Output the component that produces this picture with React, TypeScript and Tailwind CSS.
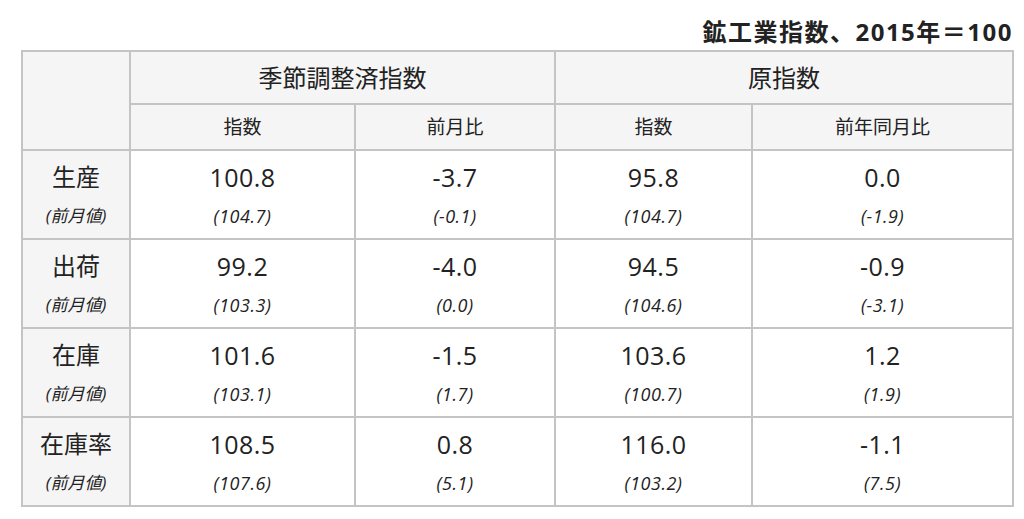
const rows = [
  { label: '生産', vals: ['100.8', '-3.7', '95.8', '0.0'], prev: ['(104.7)', '(-0.1)', '(104.7)', '(-1.9)'] },
  { label: '出荷', vals: ['99.2', '-4.0', '94.5', '-0.9'], prev: ['(103.3)', '(0.0)', '(104.6)', '(-3.1)'] },
  { label: '在庫', vals: ['101.6', '-1.5', '103.6', '1.2'], prev: ['(103.1)', '(1.7)', '(100.7)', '(1.9)'] },
  { label: '在庫率', vals: ['108.5', '0.8', '116.0', '-1.1'], prev: ['(107.6)', '(5.1)', '(103.2)', '(7.5)'] },
];

const cell = 'border-2 border-[#c4c4c4] text-center align-middle';

export default function App() {
  return (
    <div className="w-[1024px] h-[519px] bg-white text-[#222] font-['Open_Sans','Noto_Sans_CJK_JP',sans-serif] pl-[21px] pr-[12px] pt-[17px]">
      <div className="text-right text-[24px] font-bold leading-[30px] h-[33px] tracking-[1.5px] -mr-[1px]">鉱工業指数、2015年＝100</div>
      <table className="w-[991px] border-collapse table-fixed">
        <colgroup>
          <col className="w-[108px]" />
          <col className="w-[225px]" />
          <col className="w-[200px]" />
          <col className="w-[197px]" />
          <col className="w-[261px]" />
        </colgroup>
        <thead>
          <tr className="h-[53px] bg-[#f5f5f5]">
            <th rowSpan={2} className={cell}></th>
            <th colSpan={2} className={`${cell} text-[24px] font-normal`}>季節調整済指数</th>
            <th colSpan={2} className={`${cell} text-[24px] font-normal`}>原指数</th>
          </tr>
          <tr className="h-[46px] bg-[#f5f5f5]">
            <th className={`${cell} text-[19px] font-normal`}>指数</th>
            <th className={`${cell} text-[19px] font-normal`}>前月比</th>
            <th className={`${cell} text-[19px] font-normal`}>指数</th>
            <th className={`${cell} text-[19px] font-normal`}>前年同月比</th>
          </tr>
        </thead>
        <tbody>
          {rows.map((r) => (
            <tr key={r.label} className="h-[89px]">
              <td className={`${cell} bg-[#f5f5f5]`}>
                <div className="text-[24px] leading-[30px]">{r.label}</div>
                <div className="text-[17px] italic leading-[24px] mt-[12px]">(前月値)</div>
              </td>
              {r.vals.map((v, i) => (
                <td key={i} className={cell}>
                  <div className="text-[25px] leading-[30px] tracking-[0.5px]">{v}</div>
                  <div className="text-[18px] italic leading-[24px] mt-[12px] tracking-[0.5px]">{r.prev[i]}</div>
                </td>
              ))}
            </tr>
          ))}
        </tbody>
      </table>
    </div>
  );
}
